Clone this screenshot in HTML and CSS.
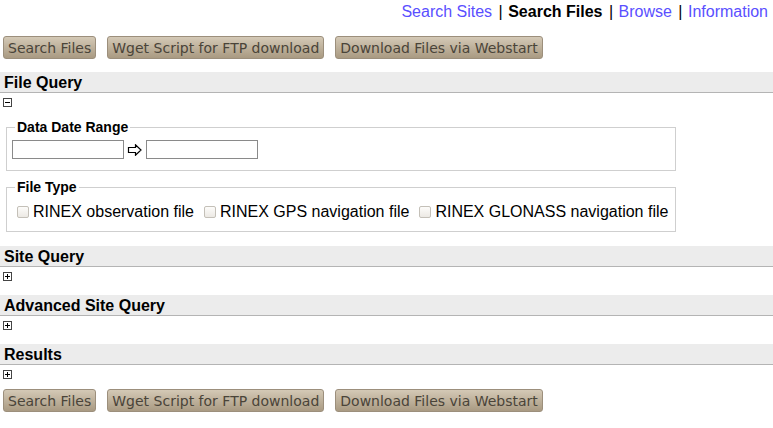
FILE: index.html
```html
<!DOCTYPE html>
<html>
<head>
<meta charset="utf-8">
<link rel="stylesheet" href="styles.css">
</head>
<body>
<div class="nav">
  <a href="#" class="link">Search Sites</a> <span class="sep">|</span> <span class="current">Search Files</span> <span class="sep">|</span> <a href="#" class="link">Browse</a> <span class="sep">|</span> <a href="#" class="link">Information</a>
</div>
<div class="buttons">
  <button class="btn">Search Files</button>
  <button class="btn">Wget Script for FTP download</button>
  <button class="btn">Download Files via Webstart</button>
</div>

<div class="section first">
  <h3 class="head">File Query</h3>
  <div class="toggle"><span class="box minus"></span></div>
  <fieldset class="fs fs-date">
    <legend class="lg">Data Date Range</legend>
    <div class="daterow">
      <input type="text" class="txt"><svg class="arrow" width="22" height="12" viewBox="0 0 22 12"><path d="M4.5 3.5 H11.5 V0.8 L17 6 L11.5 11.2 V8.5 H4.5 Z" fill="#fff" stroke="#000" stroke-width="1.2" stroke-linejoin="miter"/></svg><input type="text" class="txt">
    </div>
  </fieldset>
  <fieldset class="fs fs-type">
    <legend class="lg">File Type</legend>
    <div class="types">
      <label class="opt"><input type="checkbox" class="cb">RINEX observation file</label>
      <label class="opt"><input type="checkbox" class="cb">RINEX GPS navigation file</label>
      <label class="opt"><input type="checkbox" class="cb">RINEX GLONASS navigation file</label>
    </div>
  </fieldset>
</div>

<div class="section">
  <h3 class="head">Site Query</h3>
  <div class="toggle"><span class="box plus"></span></div>
</div>
<div class="section">
  <h3 class="head">Advanced Site Query</h3>
  <div class="toggle"><span class="box plus"></span></div>
</div>
<div class="section">
  <h3 class="head">Results</h3>
  <div class="toggle"><span class="box plus"></span></div>
</div>

<div class="buttons bottom">
  <button class="btn">Search Files</button>
  <button class="btn">Wget Script for FTP download</button>
  <button class="btn">Download Files via Webstart</button>
</div>
</body>
</html>
```
FILE: styles.css
```css
html, body {
  margin: 0;
  padding: 0;
  background: #fff;
  font-family: "Liberation Sans", Arial, sans-serif;
  color: #000;
}
.nav {
  text-align: right;
  font-size: 16px;
  line-height: 18px;
  padding: 3px 5px 0 0;
  height: 21px;
}
.link {
  color: #5a4fff;
  text-decoration: none;
}
.sep { color: #000; margin: 0 1px 0 2px; }
.current { font-weight: bold; }

.buttons {
  display: flex;
  gap: 11px;
  padding-left: 3px;
  margin-top: 12px;
}
.buttons.bottom { margin-top: 10px; }
.btn {
  font-family: "DejaVu Sans", Verdana, sans-serif;
  font-size: 14px;
  color: #4a4439;
  height: 23px;
  padding: 0 4px;
  border: 1px solid #9c8f7c;
  border-radius: 3px;
  background: linear-gradient(#d4c9b6, #a99a82);
  line-height: 20px;
}

.section { margin-top: 14px; }
.section.first { margin-top: 13px; }
.head {
  margin: 0;
  font-size: 16px;
  font-weight: bold;
  background: #ececec;
  border-bottom: 1px solid #b4b4b4;
  height: 20px;
  line-height: 21px;
  padding-left: 4px;
}
.toggle {
  height: 9px;
  padding: 5px 0 0 3px;
}
.box {
  display: block;
  width: 7px;
  height: 7px;
  border: 1px solid #444;
  position: relative;
  background: #fff;
}
.box::before {
  content: "";
  position: absolute;
  left: 1px;
  top: 3px;
  width: 5px;
  height: 1px;
  background: #000;
}
.plus::after {
  content: "";
  position: absolute;
  left: 3px;
  top: 1px;
  width: 1px;
  height: 5px;
  background: #000;
}

.fs {
  margin: 0 0 0 6px;
  width: 670px;
  box-sizing: border-box;
  border: 1px solid #cfcfcf;
  padding: 0 5px;
}
.fs-date { margin-top: 12px; height: 52px; }
.fs-type { margin-top: 8px; height: 53px; }
.lg {
  font-size: 14px;
  font-weight: bold;
  padding: 0 2px;
  margin-left: 3px;
  line-height: 16px;
}
.daterow {
  display: flex;
  align-items: center;
  margin-top: 5px;
}
.txt {
  width: 112px;
  height: 19px;
  box-sizing: border-box;
  border: 1px solid #8a8a8a;
  margin: 0;
  padding: 0 2px;
}
.arrow {
  display: block;
  flex: none;
}
.types {
  display: flex;
  gap: 10px;
  margin-top: 8px;
  padding-left: 5px;
  font-size: 16px;
  line-height: 18px;
}
.opt {
  display: flex;
  align-items: center;
  white-space: nowrap;
}
.cb {
  appearance: none;
  -webkit-appearance: none;
  width: 12px;
  height: 12px;
  margin: 0 4px 0 0;
  border: 1px solid #c4c0b8;
  border-radius: 2px;
  background: linear-gradient(#fdfcfa, #ece9e4);
}
```
